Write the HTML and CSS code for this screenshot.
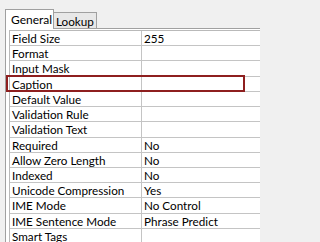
FILE: index.html
```html
<!DOCTYPE html>
<html>
<head>
<meta charset="utf-8">
<link rel="stylesheet" href="styles.css">
</head>
<body>
<div class="sheet">
  <div class="tabs">
    <div class="tab active">General</div>
    <div class="tab">Lookup</div>
  </div>
  <div class="panel">
    <div class="grid">
      <div class="lbl">Field Size</div><div class="val">255</div>
      <div class="lbl">Format</div><div class="val"></div>
      <div class="lbl">Input Mask</div><div class="val"></div>
      <div class="lbl">Caption</div><div class="val"></div>
      <div class="lbl">Default Value</div><div class="val"></div>
      <div class="lbl">Validation Rule</div><div class="val"></div>
      <div class="lbl">Validation Text</div><div class="val"></div>
      <div class="lbl">Required</div><div class="val">No</div>
      <div class="lbl">Allow Zero Length</div><div class="val">No</div>
      <div class="lbl">Indexed</div><div class="val">No</div>
      <div class="lbl">Unicode Compression</div><div class="val">Yes</div>
      <div class="lbl">IME Mode</div><div class="val">No Control</div>
      <div class="lbl">IME Sentence Mode</div><div class="val">Phrase Predict</div>
      <div class="lbl">Smart Tags</div><div class="val"></div>
    </div>
  </div>
  <div class="highlight"></div>
</div>
</body>
</html>
```
FILE: styles.css
```css
html, body {
  margin: 0;
  padding: 0;
  background: #f0f0f0;
}
.sheet {
  position: relative;
  width: 260px;
  height: 242px;
  overflow: hidden;
  font-family: Lato, "Open Sans", sans-serif;
  font-size: 11.7px;
  color: #000;
}
.tabs {
  display: flex;
  align-items: flex-end;
  height: 28px;
  padding-left: 5px;
  box-sizing: border-box;
}
.tab {
  box-sizing: border-box;
  height: 16px;
  width: 43px;
  line-height: 16px;
  padding-left: 2px;
  background: #e8e8e8;
  border: 1px solid #a0a0a0;
  border-left: none;
  border-bottom: none;
  white-space: nowrap;
}
.tab.active {
  position: relative;
  z-index: 1;
  height: 20px;
  width: 49px;
  margin-bottom: -1px;
  line-height: 19px;
  padding-left: 5px;
  background: #fff;
  border-left: 1px solid #a0a0a0;
  font-size: 12px;
}
.panel {
  margin-left: 5px;
  background: #fff;
  border-top: 1px solid #a0a0a0;
  border-left: 1px solid #a0a0a0;
  padding: 1px 0 0 3px;
  height: 240px;
}
.grid {
  display: grid;
  grid-template-columns: 132px 1fr;
  grid-auto-rows: 15.23px;
  border-top: 1px solid #b9b9b9;
  border-left: 1px solid #b9b9b9;
}
.lbl, .val {
  box-sizing: border-box;
  border-bottom: 1px solid #c4c4c4;
  line-height: 14px;
  white-space: nowrap;
  overflow: hidden;
}
.lbl {
  padding-left: 2px;
  border-right: 1px solid #c4c4c4;
}
.val {
  padding-left: 2px;
}
.highlight {
  position: absolute;
  left: 6px;
  top: 75px;
  width: 239px;
  height: 17px;
  box-sizing: border-box;
  border: 2px solid #8e1f1f;
}
```
